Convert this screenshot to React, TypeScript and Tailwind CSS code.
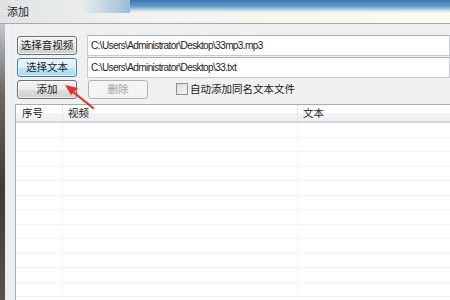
import React from 'react';

const cjk = "font-['Noto_Sans_CJK_SC',sans-serif]";

function WinButton({ label, focused, disabled }: { label: string; focused?: boolean; disabled?: boolean }) {
  const skin = disabled
    ? 'border-[#adb2b5] bg-[#f4f4f4] text-[#a0a0a0]'
    : focused
      ? 'border-[#3c7fb1] bg-[linear-gradient(#eaf6fd_0%,#d9f0fc_50%,#bee6fd_51%,#a7d9f5_100%)] text-[#1a1a1a] shadow-[inset_0_0_0_1px_#ffffffaa]'
      : 'border-[#707070] bg-[linear-gradient(#f2f2f2_0%,#ebebeb_50%,#dddddd_51%,#cfcfcf_100%)] text-[#1a1a1a] shadow-[inset_0_0_0_1px_#ffffffaa]';
  return (
    <div
      className={`w-[60px] h-[19px] shrink-0 rounded-[3px] border flex items-center justify-center text-[10.5px] leading-none whitespace-nowrap ${cjk} ${skin}`}
    >
      {label}
    </div>
  );
}

function PathBox({ value }: { value: string }) {
  return (
    <div className="flex-1 h-[21px] bg-white border border-[#c5c9d0] border-t-[#abadb3] flex items-center pl-[3px] text-[10px] tracking-[-0.6px] text-[#1a1a1a] font-['Liberation_Sans',sans-serif]">
      {value}
    </div>
  );
}

export default function App() {
  const rows = Array.from({ length: 12 });
  return (
    <div className="relative w-[450px] h-[300px] overflow-hidden flex flex-col bg-[#f0f0f0]">
      {/* title bar */}
      <div className="relative h-[24px] shrink-0 bg-[linear-gradient(90deg,#dfe3e6_0%,#f1f3f0_30%,#fbfbf0_100%)] border-b border-[#a7a9ad]">
        <div className="absolute left-[130px] right-0 top-0 h-[13px] bg-[linear-gradient(#3a78b0_0%,#5d98c8_45%,#c9dbe6_80%,#fbfbf0_100%)]" />
        <div className="absolute left-[80px] w-[50px] top-0 h-[13px] bg-[linear-gradient(90deg,#e6e9eb00,#9cbcd8_100%)]" />
        <span className={`absolute left-[7px] top-[6px] text-[11px] leading-none text-[#222] ${cjk}`}>添加</span>
      </div>

      <div className="flex flex-1 min-h-0">
        {/* left window frame */}
        <div className="w-[5px] shrink-0 bg-[linear-gradient(#c4c6c8_0%,#6a6764_25%,#3d3a37_60%,#5a524c_100%)]" />
        <div className="w-[10px] shrink-0 bg-[#eceff2]" />

        <div className="flex-1 flex flex-col pt-[10px]">
          <div className="pl-[2px] flex flex-col">
            <div className="flex items-center h-[22px] gap-[10px]">
              <WinButton label="选择音视频" />
              <PathBox value="C:\Users\Administrator\Desktop\33mp3.mp3" />
            </div>
            <div className="flex items-center h-[22px] gap-[10px]">
              <WinButton label="选择文本" focused />
              <PathBox value="C:\Users\Administrator\Desktop\33.txt" />
            </div>
            <div className="flex items-center h-[22px]">
              <WinButton label="添加" />
              <div className="ml-[11px]">
                <WinButton label="删除" disabled />
              </div>
              <div className="ml-[28px] w-[12px] h-[12px] border border-[#8f8f8f] bg-[linear-gradient(135deg,#dcdcdc,#f4f4f4)]" />
              <span className={`ml-[2px] text-[10.5px] leading-none text-[#1a1a1a] ${cjk}`}>自动添加同名文本文件</span>
            </div>
          </div>

          {/* list view */}
          <div className="mt-[4px] flex-1 bg-white border-t border-l border-[#a9acb2] flex flex-col">
            <div className="h-[18px] flex shrink-0 bg-[linear-gradient(#ffffff_0%,#ffffff_50%,#f4f5f7_51%,#eceef1_100%)] border-b-[2px] border-[#d5d7da]">
              <div className={`w-[47px] border-r border-[#e3e5e8] pl-[6px] text-[10.5px] text-[#1a1a1a] flex items-center ${cjk}`}>序号</div>
              <div className={`w-[235px] border-r border-[#e3e5e8] pl-[5px] text-[10.5px] text-[#1a1a1a] flex items-center ${cjk}`}>视频</div>
              <div className={`flex-1 pl-[5px] text-[10.5px] text-[#1a1a1a] flex items-center ${cjk}`}>文本</div>
            </div>
            {rows.map((_, i) => (
              <div key={i} className="h-[14.5px] shrink-0 flex border-b border-[#f3f3f3]">
                <div className="w-[47px] border-r border-[#f3f3f3]" />
                <div className="w-[235px] border-r border-[#f3f3f3]" />
                <div className="flex-1" />
              </div>
            ))}
          </div>
        </div>
      </div>

      {/* red annotation arrow */}
      <svg className="absolute left-0 top-0" width="450" height="300" viewBox="0 0 450 300">
        <line x1="93" y1="108" x2="72" y2="91" stroke="#e53224" strokeWidth="2.2" strokeLinecap="round" />
        <polygon points="65,85 78,88 71,95" fill="#e53224" />
      </svg>
    </div>
  );
}
